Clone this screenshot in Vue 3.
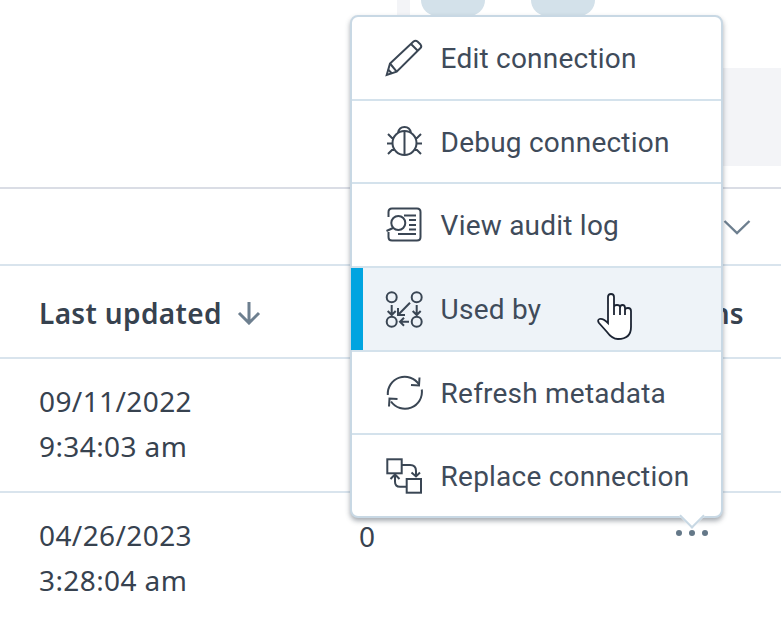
<script setup>
const menuItems = [
  { label: 'Edit connection', icon: 'edit' },
  { label: 'Debug connection', icon: 'bug' },
  { label: 'View audit log', icon: 'audit' },
  { label: 'Used by', icon: 'used', active: true },
  { label: 'Refresh metadata', icon: 'refresh' },
  { label: 'Replace connection', icon: 'replace' }
]

const rows = [
  { date: '09/11/2022', time: '9:34:03 am', count: '' },
  { date: '04/26/2023', time: '3:28:04 am', count: '0' }
]
</script>

<template>
  <div class="page">
    <div class="top">
      <div class="tabs">
        <span class="stub"></span>
        <span class="pill"></span>
        <span class="pill"></span>
      </div>
      <div class="panel"></div>
    </div>

    <div class="filter-row">
      <svg class="chevron" width="28" height="16" viewBox="0 0 28 16">
        <path d="M1.5 2 L14 14 L26.5 2" />
      </svg>
    </div>

    <div class="head-row">
      <div class="head-cell">
        Last updated
        <svg class="sort" width="24" height="24" viewBox="0 0 24 24">
          <path d="M12 1 V22 M2 12 L12 22 L22 12" />
        </svg>
      </div>
      <div class="head-cell actions">Actions</div>
    </div>

    <div class="row" v-for="row in rows" :key="row.date">
      <div class="date">
        <div>{{ row.date }}</div>
        <div>{{ row.time }}</div>
      </div>
      <div class="count">{{ row.count }}</div>
    </div>

    <div class="menu">
      <div
        class="item"
        v-for="item in menuItems"
        :key="item.label"
        :class="{ active: item.active }"
      >
        <svg class="icon" width="40" height="40" viewBox="0 0 40 40">
          <g v-if="item.icon === 'edit'">
            <path d="M1.7 37 L5 25.5 L28.5 3.5 Q30.5 2 32.5 3.5 L35.5 6.5 Q37 8.5 35.5 10 L11.7 33.7 Z" />
            <path d="M5 25.5 L11.7 33.7 M26 6 L33 13 M3 31.5 L7 35.5" />
          </g>
          <g v-if="item.icon === 'bug'">
            <circle cx="19.5" cy="21" r="12" />
            <path d="M19.5 9 V33 M13 11 Q14 5 19.5 5 Q25 5 26 11" />
            <path d="M3 12 L7 16 H9 M36 12 L32 16 H30 M2 21.5 H7 M37 21.5 H32 M3 32 L7 28 H9 M36 32 L32 28 H30" />
          </g>
          <g v-if="item.icon === 'audit'">
            <path d="M3.5 12 V7 Q3.5 3.5 7 3.5 H32 Q35.5 3.5 35.5 7 V32 Q35.5 35.5 32 35.5 H7 Q3.5 35.5 3.5 32 V27" />
            <circle cx="13.3" cy="18" r="7" />
            <path d="M8 23 L1.5 26 M19 10.5 H31 M24 15 H31 M24 20 H31 M24 24.5 H31 M13 29 H31" />
          </g>
          <g v-if="item.icon === 'used'">
            <circle cx="6.7" cy="8.3" r="5" />
            <circle cx="31.7" cy="8.3" r="5" />
            <circle cx="6.7" cy="32.7" r="5" />
            <circle cx="31.7" cy="32.7" r="5" />
            <path d="M6.7 16 V26 M2.7 22 L6.7 26 L10.7 22" />
            <path d="M31.7 16 V26 M27.7 22 L31.7 26 L35.7 22" />
            <path d="M25 13.7 L13 26 M13 19 V26 H20" />
            <path d="M24 32.7 H15 M19 28.7 L15 32.7 L19 36.7" />
          </g>
          <g v-if="item.icon === 'refresh'">
            <path d="M2.8 22 A17 17 0 0 1 34 11.5" />
            <path d="M36.8 16.5 A17 17 0 0 1 6 28.5" />
            <path d="M34.5 4.5 L34 12.5 L26 12" />
            <path d="M4 33.5 L4.5 25.5 L12.5 26" />
          </g>
          <g v-if="item.icon === 'replace'">
            <rect x="2.3" y="3.3" width="14.4" height="14" />
            <rect x="21.7" y="23" width="14.3" height="13.7" />
            <path d="M16.7 9 H25 Q31 9 31 15 V20.5 M26.5 16.5 L31 20.5 L35 16.5" />
            <path d="M21.7 30.7 H15 Q10 30.7 10 25.7 V18.5 M5.5 23 L10 18.5 L14.5 23" />
          </g>
        </svg>
        <span class="label">{{ item.label }}</span>
      </div>
      <div class="arrow"></div>
    </div>

    <svg class="cursor" width="38" height="48" viewBox="0 0 38 48">
      <path d="M11 30 V4 Q11 1 14 1 Q17 1 17 4 V14 Q17 12 20 12 Q23 12 23 14 V15 Q23 12 25.5 12 Q28 12 28 15 V17 Q28 15 31 15 Q34 15 34 18 V34 Q34 46 21 46 Q15 46 10 39 L2 30 Q0 27 2.5 26 Q6 25 11 30 Z" />
      <path d="M17 14 V22 M23 15 V22 M28 17 V22" />
    </svg>

    <div class="dots">
      <span></span><span></span><span></span>
    </div>
  </div>
</template>

<style>
html, body {
  margin: 0;
  background: #fff;
}
</style>

<style scoped>
.page {
  position: relative;
  width: 781px;
  height: 618px;
  overflow: hidden;
  background: #fff;
  font-family: "Noto Sans", sans-serif;
  color: #37424f;
}

.top {
  height: 187px;
  position: relative;
  border-bottom: 2px solid #dadde5;
}

.tabs {
  display: flex;
  padding-left: 397px;
}

.stub {
  width: 13px;
  height: 16px;
  background: #f3f4f7;
  margin-right: 11px;
}

.pill {
  width: 64px;
  height: 16px;
  background: #d3e1ea;
  border-radius: 0 0 16px 16px;
  margin-right: 46px;
}

.panel {
  position: absolute;
  left: 723px;
  top: 68px;
  width: 58px;
  height: 98px;
  background: #f3f4f7;
}

.filter-row {
  height: 75px;
  border-bottom: 2px solid #d9e4ed;
  display: flex;
  justify-content: flex-end;
  align-items: center;
  padding-right: 30px;
}

.chevron path,
.sort path {
  fill: none;
  stroke: #6d7f8f;
  stroke-width: 2.4;
}

.sort path {
  stroke-width: 3;
}

.head-row {
  height: 93px;
  box-sizing: border-box;
  border-bottom: 2px solid #d9e4ed;
  display: flex;
  justify-content: space-between;
  align-items: center;
  padding: 2px 37px 0 39px;
}

.head-cell {
  display: flex;
  align-items: center;
  gap: 15px;
  font-size: 28px;
  font-weight: 600;
  letter-spacing: 0.35px;
}

.row {
  height: 132px;
  border-bottom: 2px solid #d9e4ed;
  display: grid;
  grid-template-columns: 320px 1fr;
  padding-left: 39px;
  align-items: center;
  font-size: 28px;
  letter-spacing: 0.4px;
  line-height: 45px;
}

.row:last-of-type {
  border-bottom: none;
}

.date {
  margin-top: -2px;
}

.count {
  align-self: start;
  padding-top: 21px;
}

.menu {
  position: absolute;
  left: 350px;
  top: 15px;
  width: 369px;
  background: #fff;
  border: 2px solid #c8d8e4;
  border-radius: 8px;
  box-shadow: 0 3px 5px rgba(60, 70, 85, 0.45);
  font-family: Roboto, sans-serif;
}

.item {
  height: 81.7px;
  display: flex;
  align-items: center;
  gap: 15.6px;
  padding-left: 33px;
  border-bottom: 2px solid #d4e2ec;
  font-size: 28px;
  letter-spacing: 0.22px;
  color: #3f4b5a;
  position: relative;
}

.item:nth-last-child(2) {
  border-bottom: none;
  height: 80px;
  padding-top: 1px;
}

.label {
  padding-top: 1px;
}

.item.active {
  background: #eef3f8;
}

.item.active::before {
  content: "";
  position: absolute;
  left: -1px;
  top: 0;
  bottom: 0;
  width: 12px;
  background: #00a4e0;
}

.icon {
  flex: none;
}

.icon path,
.icon circle,
.icon rect {
  fill: none;
  stroke: #3a4654;
  stroke-width: 2;
}

.arrow {
  position: absolute;
  left: 331px;
  bottom: -9px;
  width: 16px;
  height: 16px;
  background: #fff;
  border-right: 2px solid #c8d8e4;
  border-bottom: 2px solid #c8d8e4;
  transform: rotate(45deg);
}

.cursor {
  position: absolute;
  left: 597px;
  top: 293px;
}

.cursor path {
  fill: #fff;
  stroke: #1c2433;
  stroke-width: 1.8;
}

.dots {
  position: absolute;
  left: 676px;
  top: 530px;
  display: flex;
  gap: 7px;
}

.dots span {
  width: 6px;
  height: 6px;
  border-radius: 50%;
  background: #647888;
}
</style>
